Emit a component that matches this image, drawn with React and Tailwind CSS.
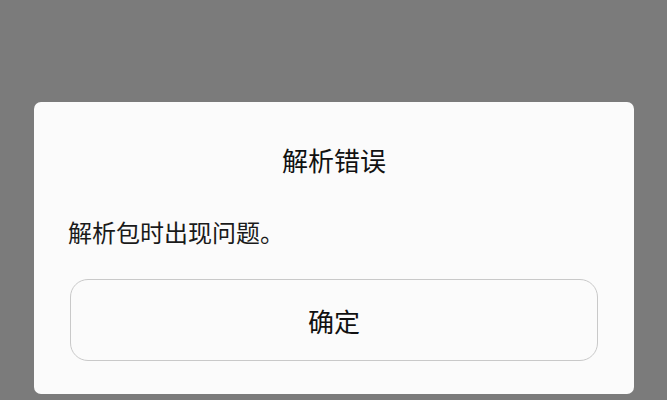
export default function App() {
  return (
    <div
      className="h-[400px] w-[667px] overflow-hidden bg-[#7b7b7b] pt-[102px]"
      style={{ fontFamily: '"Noto Sans CJK SC", "Noto Sans", sans-serif' }}
    >
      {/* dialog */}
      <div className="ml-[34px] flex w-[600px] flex-col rounded-[7px] bg-[#fbfbfb] px-[34px] pt-[38px] pb-[33px]">
        <h1 className="text-center text-[26px] leading-[39px] font-normal text-[#111111]">解析错误</h1>
        <p className="mt-[35px] text-[24px] leading-[36px] text-[#1a1a1a]">解析包时出现问题。</p>
        <button className="mx-[2px] mt-[29px] flex h-[82px] items-center justify-center rounded-[18px] border border-[#c9c9c9] bg-[#fbfbfb] text-[26px] text-[#111111]">
          确定
        </button>
      </div>
    </div>
  );
}
